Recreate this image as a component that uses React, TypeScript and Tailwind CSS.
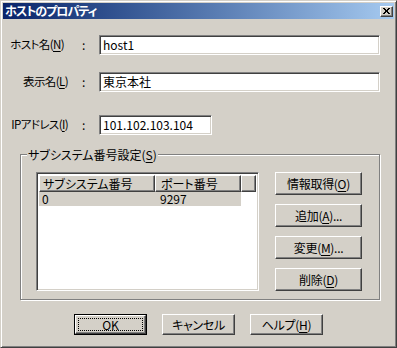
import React from "react";

const font = "font-['Noto_Sans_CJK_JP',sans-serif] [font-feature-settings:'palt']";
const raised =
  "border border-t-white border-l-white border-b-[#404040] border-r-[#404040] shadow-[inset_-1px_-1px_0_#808080]";
const sunken =
  "border border-t-[#808080] border-l-[#808080] border-b-white border-r-white shadow-[inset_1px_1px_0_#404040,inset_-1px_-1px_0_#d4d0c8]";

function U({ c }: { c: string }) {
  return <span className="underline underline-offset-[2px] decoration-1">{c}</span>;
}

function Btn({ children, w = "w-[87px]", h = "h-[23px]" }: { children: React.ReactNode; w?: string; h?: string }) {
  return (
    <div className={`${raised} ${w} ${h} bg-[#d4d0c8] flex items-center justify-center text-[12px] leading-none text-black tracking-[-0.3px]`}>
      {children}
    </div>
  );
}

function Row({ label, pr = "", value, inputW, mt }: { label: React.ReactNode; pr?: string; value: string; inputW: string; mt: string }) {
  return (
    <div className={`flex items-center ${mt}`}>
      <div className={`w-[65px] text-right text-[11.5px] tracking-[-0.6px] leading-none whitespace-nowrap ${pr}`}>{label}</div>
      <div className="w-[31px] pl-[14px] text-[12px] leading-none">:</div>
      <div className={`${sunken} ${inputW} h-[20px] bg-white flex items-center pl-[3px] text-[12px] leading-none`}>{value}</div>
    </div>
  );
}

export default function App() {
  return (
    <div className={`${font} w-[397px] h-[348px] bg-[#d4d0c8] text-black border border-t-[#d4d0c8] border-l-[#d4d0c8] border-b-[#404040] border-r-[#404040] shadow-[inset_1px_1px_0_#fff,inset_-1px_-1px_0_#808080] p-[2px] flex flex-col`}>
      <div className="h-[16px] bg-linear-to-r from-[#0a246a] to-[#a6caf0] flex items-center justify-between pl-[2px] pr-[1px]">
        <span className="text-white font-bold text-[12px] tracking-[-1px] leading-none">ホストのプロパティ</span>
        <div className={`${raised} w-[13px] h-[11px] bg-[#d4d0c8] flex items-center justify-center`}>
          <svg width="7" height="6" viewBox="0 0 7 6" shapeRendering="crispEdges">
            <path d="M0 0h2v1h-2zM5 0h2v1h-2zM1 1h2v1h-2zM4 1h2v1h-2zM2 2h3v1h-3zM2 3h3v1h-3zM1 4h2v1h-2zM4 4h2v1h-2zM0 5h2v1h-2zM5 5h2v1h-2z" fill="#000" />
          </svg>
        </div>
      </div>

      <Row mt="mt-[16px]" pr="pr-[4px]" label={<>ホスト名(<U c="N" />)</>} value="host1" inputW="w-[281px]" />
      <Row mt="mt-[17px]" label={<>表示名(<U c="L" />)</>} value="東京本社" inputW="w-[281px]" />
      <Row mt="mt-[23px]" label={<>IPアドレス(<U c="I" />)</>} value="101.102.103.104" inputW="w-[113px]" />

      <div className="relative mt-[19px] ml-[17px] w-[360px] h-[146px] border border-[#808080] shadow-[inset_1px_1px_0_#fff,1px_1px_0_#fff] pt-[17px] pl-[15px] flex gap-[16px]">
        <span className="absolute left-[6px] top-[-7px] bg-[#d4d0c8] px-[1px] text-[12px] leading-[13px]">
          サブシステム番号設定(<U c="S" />)
        </span>
        <div className={`${sunken} w-[223px] h-[119px] bg-white p-[2px] flex flex-col`}>
          <div className="flex h-[17px] text-[12px] leading-none">
            <div className={`${raised} w-[116px] bg-[#d4d0c8] flex items-center pl-[3px]`}>サブシステム番号</div>
            <div className={`${raised} w-[86px] bg-[#d4d0c8] flex items-center pl-[5px]`}>ポート番号</div>
            <div className={`${raised} flex-1 bg-[#d4d0c8]`} />
          </div>
          <div className="flex w-[202px] h-[14px] bg-[#d4d0c8] text-[12px] leading-none items-center">
            <div className="w-[116px] pl-[3px]">0</div>
            <div className="pl-[5px]">9297</div>
          </div>
        </div>
        <div className="flex flex-col gap-[9px]">
          <Btn>情報取得(<U c="O" />)</Btn>
          <Btn>追加(<U c="A" />)...</Btn>
          <Btn>変更(<U c="M" />)...</Btn>
          <Btn>削除(<U c="D" />)</Btn>
        </div>
      </div>

      <div className="mt-[14px] flex justify-center gap-[15px]">
        <div className="w-[73px] h-[21px] border border-black">
          <div className={`${raised} w-full h-full bg-[#d4d0c8] p-[2px]`}>
            <div className="w-full h-full border border-dotted border-black flex items-center justify-center text-[12px] leading-none">OK</div>
          </div>
        </div>
        <Btn w="w-[73px]" h="h-[21px]">キャンセル</Btn>
        <Btn w="w-[73px]" h="h-[21px]">ヘルプ(<U c="H" />)</Btn>
      </div>
    </div>
  );
}
